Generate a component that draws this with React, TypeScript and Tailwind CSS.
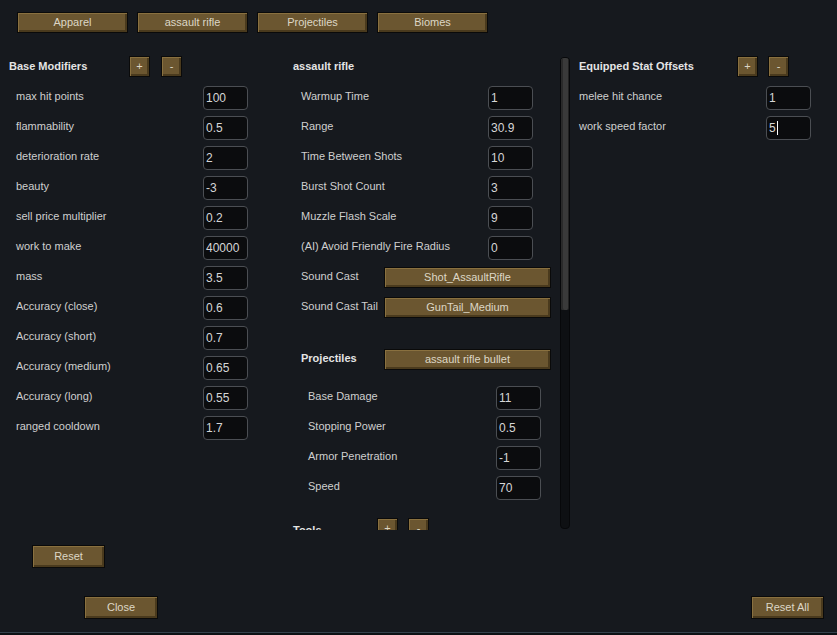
import React from 'react'

const baseMods = [
  ['max hit points', '100'],
  ['flammability', '0.5'],
  ['deterioration rate', '2'],
  ['beauty', '-3'],
  ['sell price multiplier', '0.2'],
  ['work to make', '40000'],
  ['mass', '3.5'],
  ['Accuracy (close)', '0.6'],
  ['Accuracy (short)', '0.7'],
  ['Accuracy (medium)', '0.65'],
  ['Accuracy (long)', '0.55'],
  ['ranged cooldown', '1.7'],
]

const weaponStats = [
  ['Warmup Time', '1'],
  ['Range', '30.9'],
  ['Time Between Shots', '10'],
  ['Burst Shot Count', '3'],
  ['Muzzle Flash Scale', '9'],
  ['(AI) Avoid Friendly Fire Radius', '0'],
]

const projectileStats = [
  ['Base Damage', '11'],
  ['Stopping Power', '0.5'],
  ['Armor Penetration', '-1'],
  ['Speed', '70'],
]

function Btn({ label, className = '' }: { label: string; className?: string }) {
  return (
    <div
      className={`flex shrink-0 items-center justify-center border border-[#0a0a0a] bg-[#6b5630] text-[11px] leading-none text-[#ddd6c6] shadow-[inset_1px_1px_0_#89703f,inset_-2px_-2px_0_#4a3a1d] ${className}`}
    >
      {label}
    </div>
  )
}

function Field({ value, caret }: { value: string; caret?: boolean }) {
  return (
    <div className="flex h-[24px] w-[45px] shrink-0 items-center rounded-[4px] border border-[#4b4e53] bg-[#0b0c0e] pl-[2px] text-[12px] text-[#d6d6d6]">
      {value}
      {caret && <span className="ml-[1px] h-[14px] w-[1px] bg-white"></span>}
    </div>
  )
}

function Row({ label, value, labelW, caret }: { label: string; value: string; labelW: string; caret?: boolean }) {
  return (
    <div className="flex h-[30px] items-start">
      <div className={`${labelW} shrink-0 pt-[3px] leading-[14px]`}>{label}</div>
      <Field value={value} caret={caret} />
    </div>
  )
}

export default function App() {
  return (
    <div className="flex h-[635px] w-[837px] flex-col overflow-hidden bg-[#16191e] font-['Liberation_Sans',Arial,sans-serif] text-[11px] text-[#cfcfcf]">
      <div className="flex gap-[9px] pl-[17px] pt-[12px]">
        {['Apparel', 'assault rifle', 'Projectiles', 'Biomes'].map((t) => (
          <Btn key={t} label={t} className="h-[21px] w-[111px]" />
        ))}
      </div>

      <div className="mt-[23px] flex h-[474px]">
        {/* left column */}
        <div className="w-[284px] shrink-0 pl-[9px]">
          <div className="flex h-[30px] items-start">
            <div className="h-[21px] w-[120px] font-bold leading-[21px] text-[#e4e4e4]">Base Modifiers</div>
            <Btn label="+" className="h-[21px] w-[21px]" />
            <Btn label="-" className="ml-[11px] h-[21px] w-[21px]" />
          </div>
          <div className="pl-[7px]">
            {baseMods.map(([l, v]) => (
              <Row key={l} label={l} value={v} labelW="w-[187px]" />
            ))}
          </div>
        </div>

        {/* middle scroll area, content continues below the fold */}
        <div className="w-[276px] shrink-0 overflow-hidden pl-[9px]">
          <div className="h-[30px] font-bold leading-[21px] text-[#e4e4e4]">assault rifle</div>
          <div className="pl-[8px]">
            {weaponStats.map(([l, v]) => (
              <Row key={l} label={l} value={v} labelW="w-[187px]" />
            ))}
            <div className="flex h-[30px] items-start">
              <div className="w-[83px] shrink-0 pt-[3px] leading-[14px]">Sound Cast</div>
              <Btn label="Shot_AssaultRifle" className="mt-[1px] h-[21px] w-[167px]" />
            </div>
            <div className="flex h-[30px] items-start">
              <div className="w-[83px] shrink-0 pt-[3px] leading-[14px]">Sound Cast Tail</div>
              <Btn label="GunTail_Medium" className="mt-[1px] h-[21px] w-[167px]" />
            </div>
            <div className="mt-[22px] flex h-[38px] items-start">
              <div className="w-[83px] shrink-0 pt-[3px] font-bold leading-[14px] text-[#e4e4e4]">Projectiles</div>
              <Btn label="assault rifle bullet" className="mt-[1px] h-[21px] w-[167px]" />
            </div>
            <div className="pl-[7px]">
              {projectileStats.map(([l, v]) => (
                <Row key={l} label={l} value={v} labelW="w-[188px]" />
              ))}
            </div>
          </div>
          <div className="mt-[12px] flex items-start">
            <div className="w-[84px] shrink-0 pt-[5px] font-bold leading-[14px] text-[#e4e4e4]">Tools</div>
            <Btn label="+" className="h-[21px] w-[21px]" />
            <Btn label="-" className="ml-[10px] h-[21px] w-[21px]" />
          </div>
        </div>

        {/* scrollbar */}
        <div className="mt-[1px] flex h-[472px] w-[10px] shrink-0 flex-col overflow-hidden rounded-[4px] border border-[#07080a] bg-[#0e1013]">
          <div className="h-[252px] w-full rounded-b-[2px] border-r border-[#222] bg-[#3a3a3a] shadow-[inset_2px_0_0_#2a2a2a]"></div>
        </div>

        {/* right column */}
        <div className="flex-1 pl-[9px]">
          <div className="flex h-[30px] items-start">
            <div className="h-[21px] w-[158px] font-bold leading-[21px] text-[#e4e4e4]">Equipped Stat Offsets</div>
            <Btn label="+" className="h-[21px] w-[21px]" />
            <Btn label="-" className="ml-[10px] h-[21px] w-[21px]" />
          </div>
          <Row label="melee hit chance" value="1" labelW="w-[187px]" />
          <Row label="work speed factor" value="5" labelW="w-[187px]" caret />
        </div>
      </div>

      <div className="mt-[15px] pl-[32px]">
        <Btn label="Reset" className="h-[23px] w-[73px]" />
      </div>

      <div className="mt-[28px] flex justify-between pl-[84px] pr-[13px]">
        <Btn label="Close" className="h-[23px] w-[74px]" />
        <Btn label="Reset All" className="h-[23px] w-[73px]" />
      </div>

      <div className="mt-auto h-[3px] border-t border-[#34414c] bg-[#0d1115]"></div>
    </div>
  )
}
